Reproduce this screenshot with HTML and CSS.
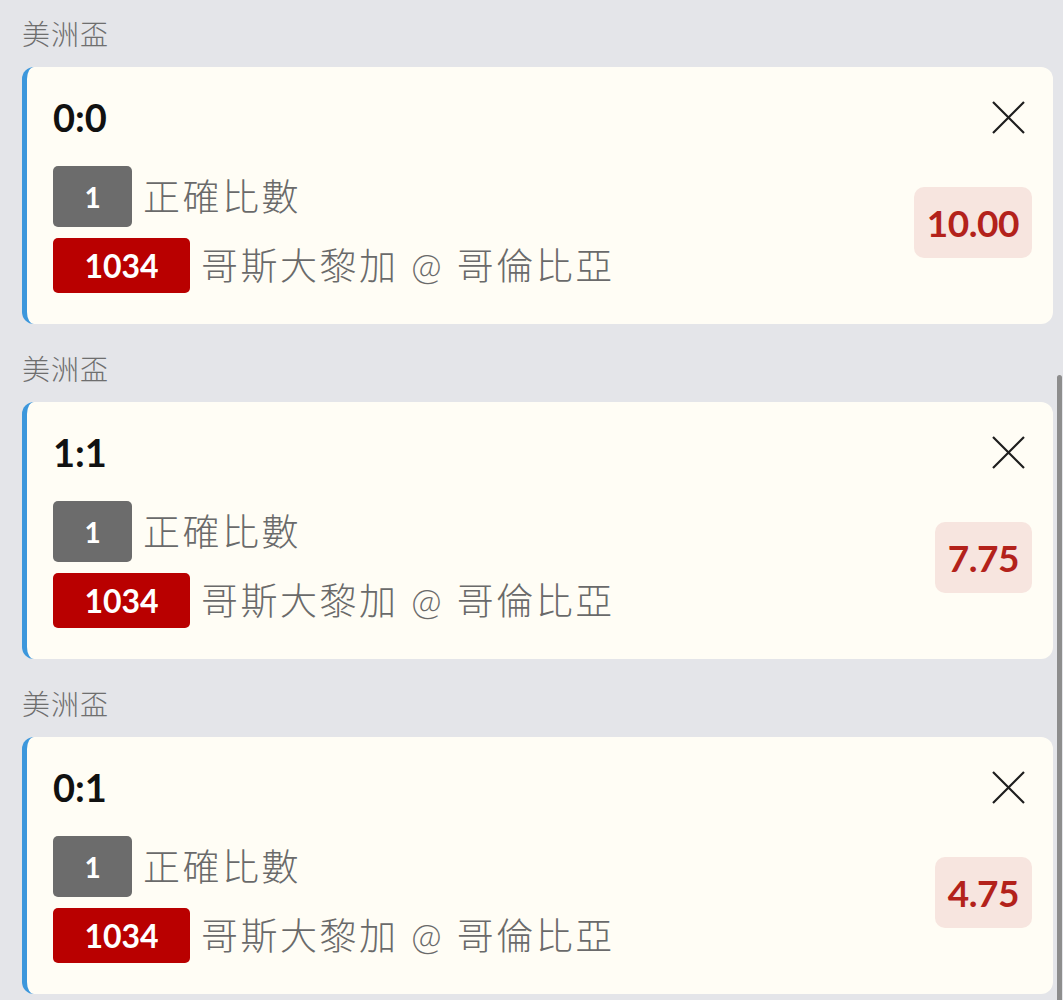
FILE: index.html
```html
<!DOCTYPE html>
<html lang="zh-Hant">
<head>
<meta charset="utf-8">
<title>投注單</title>
<link rel="stylesheet" href="styles.css">
</head>
<body>
<div class="list">
  <section class="group">
    <div class="league">美洲盃</div>
    <div class="card">
      <div class="card-head">
        <div class="score">0:0</div>
        <button class="close" aria-label="關閉">
          <svg viewBox="0 0 33 33" width="33" height="33"><path d="M1 1 L32 32 M32 1 L1 32" stroke="#1e1e1e" stroke-width="2.2" fill="none"/></svg>
        </button>
      </div>
      <div class="card-body">
        <div class="rows">
          <div class="row"><span class="badge gray">1</span><span class="label">正確比數</span></div>
          <div class="row"><span class="badge red">1034</span><span class="label">哥斯大黎加 @ 哥倫比亞</span></div>
        </div>
        <div class="odds">10.00</div>
      </div>
    </div>
  </section>
  <section class="group">
    <div class="league">美洲盃</div>
    <div class="card">
      <div class="card-head">
        <div class="score">1:1</div>
        <button class="close" aria-label="關閉">
          <svg viewBox="0 0 33 33" width="33" height="33"><path d="M1 1 L32 32 M32 1 L1 32" stroke="#1e1e1e" stroke-width="2.2" fill="none"/></svg>
        </button>
      </div>
      <div class="card-body">
        <div class="rows">
          <div class="row"><span class="badge gray">1</span><span class="label">正確比數</span></div>
          <div class="row"><span class="badge red">1034</span><span class="label">哥斯大黎加 @ 哥倫比亞</span></div>
        </div>
        <div class="odds">7.75</div>
      </div>
    </div>
  </section>
  <section class="group">
    <div class="league">美洲盃</div>
    <div class="card">
      <div class="card-head">
        <div class="score">0:1</div>
        <button class="close" aria-label="關閉">
          <svg viewBox="0 0 33 33" width="33" height="33"><path d="M1 1 L32 32 M32 1 L1 32" stroke="#1e1e1e" stroke-width="2.2" fill="none"/></svg>
        </button>
      </div>
      <div class="card-body">
        <div class="rows">
          <div class="row"><span class="badge gray">1</span><span class="label">正確比數</span></div>
          <div class="row"><span class="badge red">1034</span><span class="label">哥斯大黎加 @ 哥倫比亞</span></div>
        </div>
        <div class="odds">4.75</div>
      </div>
    </div>
  </section>
</div>
<div class="scrollbar"></div>
</body>
</html>
```

FILE: styles.css
```css
html, body {
  margin: 0;
  padding: 0;
  background: #e4e5e9;
  height: 1000px;
  overflow: hidden;
}
body {
  font-family: "Lato", "Noto Sans CJK TC", "Noto Sans", sans-serif;
  position: relative;
}
.list {
  padding: 0 10px 0 22px;
}
.group {
  margin-bottom: 11px;
}
.league {
  font-size: 28px;
  line-height: 36px;
  padding: 16px 0 15px;
  color: #6e6e6e;
  font-weight: 300;
  letter-spacing: 1px;
}
.card {
  box-sizing: border-box;
  height: 257px;
  background: #fffdf5;
  border-left: 5px solid #3c97dc;
  border-radius: 12px;
  padding: 28px 21px 0 26px;
  display: flex;
  flex-direction: column;
}
.card-head {
  display: flex;
  justify-content: space-between;
  align-items: center;
  height: 44px;
}
.score {
  font-size: 38px;
  font-weight: 700;
  color: #111;
  line-height: 44px;
}
.close {
  border: 0;
  background: none;
  padding: 0;
  margin-right: 7px;
  width: 33px;
  height: 33px;
  display: block;
}
.close svg { display: block; }
.card-body {
  display: flex;
  justify-content: space-between;
  align-items: flex-start;
  margin-top: 27px;
}
.rows {
  display: flex;
  flex-direction: column;
  gap: 11px;
}
.row {
  display: flex;
  align-items: center;
}
.badge {
  display: flex;
  align-items: center;
  justify-content: center;
  color: #fff;
  border-radius: 5px;
}
.badge.gray {
  width: 79px;
  height: 61px;
  background: #6c6c6c;
  font-size: 28px;
  font-weight: 700;
}
.badge.red {
  width: 137px;
  height: 55px;
  background: #b90000;
  font-size: 32px;
  font-weight: 700;
}
.label {
  margin-left: 11px;
  font-size: 37px;
  font-weight: 300;
  letter-spacing: 2.5px;
  color: #6a6a6a;
  line-height: 44px;
}
.odds {
  margin-top: 21px;
  height: 71px;
  line-height: 71px;
  padding: 0 13px;
  border-radius: 10px;
  background: #f7e5df;
  color: #b3221b;
  font-size: 37px;
  font-weight: 700;
  letter-spacing: -0.5px;
}
.scrollbar {
  position: absolute;
  right: 1px;
  top: 375px;
  width: 5px;
  height: 625px;
  background: #8d8d8d;
  border-radius: 3px 3px 0 0;
}
```
